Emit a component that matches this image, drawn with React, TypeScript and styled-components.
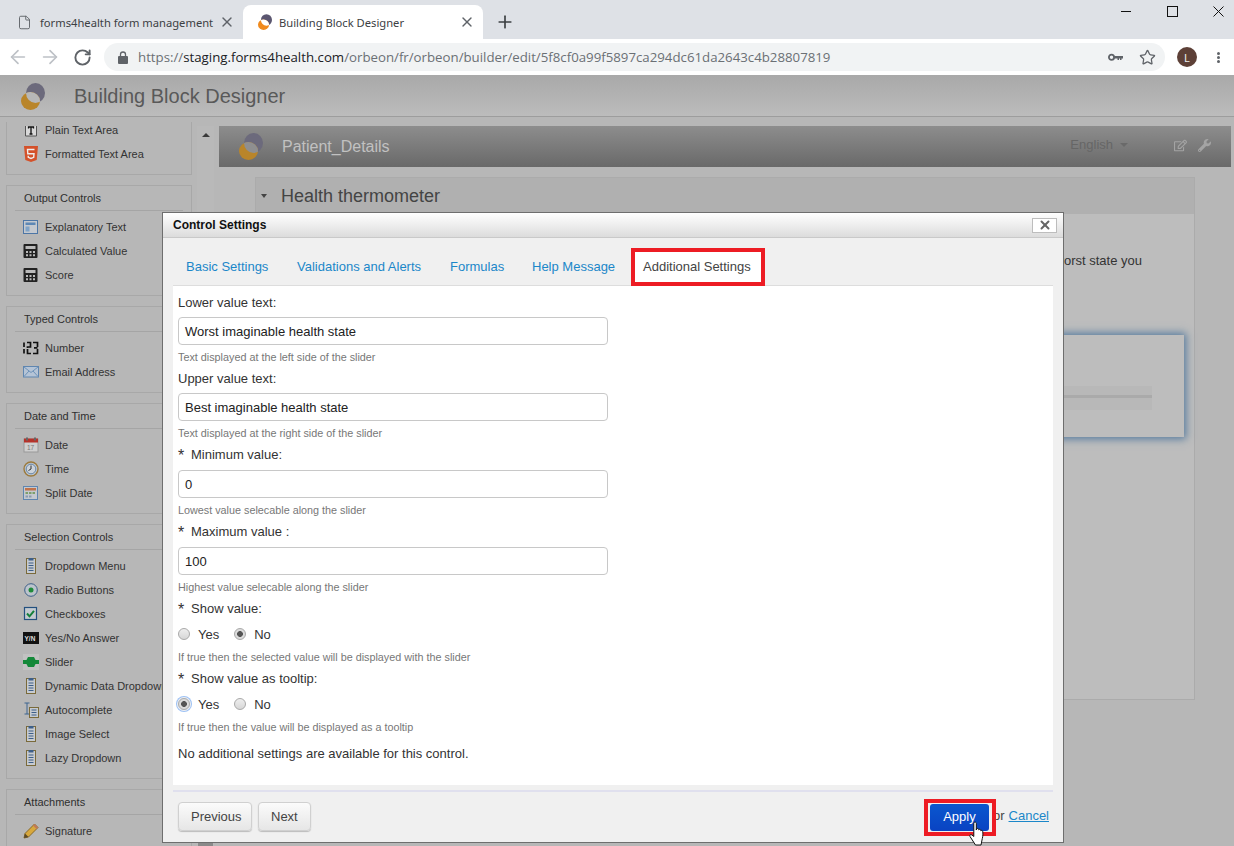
import React, { useId } from "react";
import styled, { createGlobalStyle } from "styled-components";
import { ArrowLeft, ArrowRight, RotateCw, Plus, X, Star, File } from "lucide-react";
import { FaRegEdit, FaWrench } from "react-icons/fa";

const Global = createGlobalStyle`
  html, body { margin: 0; padding: 0; background: #b7b7b7; }
  * { box-sizing: border-box; }
  #root { width: 1234px; height: 846px; overflow: hidden; }
`;

const Shell = styled.div`
  position: relative; width: 1234px; height: 846px; overflow: hidden;
  display: flex; flex-direction: column;
  font-family: "Liberation Sans", Arial, sans-serif; color: #333;
`;
const TabStrip = styled.div`
  height: 39px; flex: none; background: #dee1e6; display: flex; align-items: flex-end; padding-left: 8px;
  font-family: "Noto Sans", "Open Sans", sans-serif; font-size: 11.2px; color: #3c4043;
`;
const BrowserTab = styled.div<{ $active?: boolean; $w: number }>`
  width: ${p => p.$w}px; height: 34px; display: flex; align-items: center; gap: 0;
  padding: 0 8px 0 ${p => (p.$active ? 15 : 9)}px;
  border-radius: 8px 8px 0 0; background: ${p => (p.$active ? "#fff" : "transparent")};
  svg { flex: none; }
`;
const TabTitle = styled.span<{ $active?: boolean }>`
  flex: 1; margin-left: ${p => (p.$active ? 7 : 8)}px; white-space: nowrap;
`;
const PlusBtn = styled.div`
  height: 34px; margin-left: 12px; display: flex; align-items: center; color: #3c4043;
`;
const WinControls = styled.div`
  margin-left: auto; margin-right: -7px; align-self: flex-start; display: flex; height: 22px; align-items: center; color: #222;
`;
const WinBtn = styled.div`
  width: 46px; height: 22px; display: flex; align-items: center; justify-content: center;
`;
const Toolbar = styled.div`
  height: 37px; flex: none; background: #fff; display: flex; align-items: center; padding-left: 2px;
  border-bottom: 1px solid #a9a9a9;
`;
const NavBtn = styled.div<{ $off?: boolean }>`
  width: 32px; height: 28px; display: flex; align-items: center; justify-content: center;
  color: ${p => (p.$off ? "#bdc1c6" : "#5f6368")};
`;
const Omnibox = styled.div`
  width: 1061px; height: 28px; margin-left: 6px; background: #f1f3f4; border-radius: 14px; display: flex; align-items: center;
  padding: 0 2px 0 14px; font-family: "Open Sans", "Noto Sans", sans-serif; font-size: 13.26px;
`;
const Url = styled.span`
  margin-left: 10px; color: #6b7075; white-space: nowrap; flex: 1;
  b { font-weight: 400; color: #202124; }
`;
const OmniIcon = styled.div`
  width: 32px; display: flex; justify-content: center; color: #5f6368;
`;
const Avatar = styled.div`
  width: 20px; height: 20px; margin-left: 12px; border-radius: 50%; background: #5d4037; color: #eee;
  font: 11px "Noto Sans", sans-serif; display: flex; align-items: center; justify-content: center;
`;
const DotsBtn = styled.div`
  margin-left: 20px; display: flex; flex-direction: column; gap: 1px;
  i { width: 3px; height: 3px; background: #5f6368; border-radius: 50%; display: block; }
`;
const AppHeader = styled.div`
  height: 41px; flex: none; display: flex; align-items: center; padding-left: 21px;
  background: linear-gradient(#a9a9a9, #bcbcbc); border-bottom: 1px solid #9d9d9d;
`;
const AppTitle = styled.div`
  margin-left: 29px; font-size: 20px; color: #595959;
`;
const Workspace = styled.div`
  flex: 1; min-height: 0; display: flex; background: #b7b7b7;
`;
const Sidebar = styled.div`
  width: 197px; flex: none; margin-top: 5px; padding: 0 5px 0 6px; overflow: hidden;
`;
const Panel = styled.div<{ $first?: boolean }>`
  border: 1px solid #a8a8a8; ${p => p.$first && "border-top: none; margin-top: -4px;"} margin-bottom: 10px;
  padding: 0 8px 8px; background: #b7b7b7;
`;
const PanelTitle = styled.div`
  height: 25px; margin-bottom: 4px; border-bottom: 1px solid #a5a5a5; padding: 6px 0 0 9px;
  font-size: 11px; line-height: 13px; color: #2f2f2f; white-space: nowrap;
`;
const Row = styled.div`
  height: 24px; display: flex; align-items: center; font-size: 11px; line-height: 12px; color: #333; white-space: nowrap;
`;
const RowIcon = styled.span`
  width: 30px; padding-left: 8px; flex: none; display: flex; align-items: center;
`;
const ScrollTrack = styled.div`
  width: 17px; flex: none; margin-top: 9px; background: #b9b9b9; display: flex; flex-direction: column; align-items: center;
`;
const ScrollUp = styled.div`
  margin-top: 7px; width: 0; height: 0; border-left: 4px solid transparent; border-right: 4px solid transparent; border-bottom: 4px solid #3a3a3a;
`;
const ScrollThumb = styled.div`
  margin-top: 706px; width: 15px; height: 30px; background: #8a8a8a;
`;
const Main = styled.div`
  flex: 1; margin-left: 5px; padding-top: 9px; min-width: 0; padding-right: 3px;
`;
const FormBar = styled.div`
  height: 41px; display: flex; align-items: center; padding: 0 20px 0 20px;
  background: linear-gradient(#8d8d8d, #696969);
`;
const FormName = styled.div`
  margin-left: 19px; font-size: 16px; color: #c1c1c1; flex: 1;
`;
const Lang = styled.div`
  font-size: 13px; line-height: 15px; margin-top: -4px; color: #666; display: flex; align-items: center; gap: 7px; margin-right: 46px;
  i { width: 0; height: 0; border-left: 4px solid transparent; border-right: 4px solid transparent; border-top: 4px solid #6a6a6a; }
`;
const FormTools = styled.div`
  display: flex; gap: 11px; color: #a4a4a4; margin-top: -3px; align-items: center;
`;
const Section = styled.div`
  margin: 10px 36px 0 36px; height: 523px; border: 1px solid #ababab; background: #bdbdbd;
`;
const SectionHead = styled.div`
  height: 36px; background: #b0b0b0; display: flex; align-items: center; padding-left: 5px; font-size: 18px; color: #444;
  i { width: 0; height: 0; margin-right: 14px; border-left: 3.5px solid transparent; border-right: 3.5px solid transparent; border-top: 4px solid #444; }
`;
const Question = styled.div`
  margin: 39px 52px 0 0; text-align: right; font-size: 13px; line-height: 16px; color: #333;
`;
const SliderBox = styled.div`
  margin: 66px 10px 0 18px; height: 102px; background: #bdbdbd; box-shadow: 0 0 8px 2px #557a9e;
  padding: 51px 32px 0 30px;
`;
const SliderTrack = styled.div`
  height: 24px; background: #b8b8b8; padding-top: 9px;
  i { display: block; height: 3px; background: #aaa; }
`;
const Modal = styled.div`
  position: absolute; left: 162px; top: 212px; width: 902px; height: 631px; background: #f0f0f0;
  border: 1px solid #6e6e6e; display: flex; flex-direction: column;
`;
const ModalHead = styled.div`
  height: 25px; flex: none; display: flex; align-items: center; justify-content: space-between; padding: 0 6px 0 10px;
  background: linear-gradient(#fff, #dcdcdc); border-bottom: 1px solid #c9c9c9;
  font-size: 12px; font-weight: 700; color: #111;
`;
const CloseBtn = styled.div`
  width: 25px; height: 15px; background: #fff; border: 1px solid #bdbdbd; display: flex; align-items: center; justify-content: center; color: #666;
`;
const Tabs = styled.div`
  flex: none; margin: 10px 10px 0 10px; height: 38px; display: flex; align-items: stretch;
  border-bottom: 1px solid #ddd; font-size: 13px;
`;
const TabLink = styled.div<{ $w: number }>`
  width: ${p => p.$w}px; padding-top: 11px; line-height: 15px; color: #1b87c9; white-space: nowrap; padding-left: 13px;
`;
const TabActive = styled.div`
  width: 134px; margin-bottom: -1px; border: 4px solid #ed1c24; padding: 7px 0 0 8px; line-height: 15px; background: #fff; color: #444; white-space: nowrap;
`;
const Content = styled.div`
  flex: none; height: 499px; margin: 0 10px; background: #fff; padding: 8px 5px 0;
`;
const FieldLabel = styled.div<{ $req?: boolean }>`
  height: ${p => (p.$req ? 17 : 16)}px; font-size: 13px; line-height: 17px; color: #333; display: flex; white-space: nowrap;
`;
const Req = styled.span`
  width: 13px; font-size: 16px; line-height: 19px; color: #333;
`;
const TextBox = styled.div`
  width: 430px; height: 28px; margin-top: 7px; border: 1px solid #c8c8c8; border-radius: 4px; padding: 1px 0 0 6px;
  font-size: 13px; line-height: 26px; color: #222; background: #fff;
`;
const Hint = styled.div<{ $wide?: boolean }>`
  margin: ${p => (p.$wide ? "9px 0 7px" : "6px 0 7px")}; height: 12px; font-size: 10.8px; line-height: 12px; color: #777; white-space: nowrap;
`;
const RadioRow = styled.div`
  display: flex; align-items: center; height: 16px; margin-top: 9px; font-size: 13px; color: #333;
`;
const RadioItem = styled.div`
  display: flex; align-items: center; margin-right: 15px;
`;
const RadioLabel = styled.span`
  margin-left: 8px;
`;
const Radio = styled.span<{ $on?: boolean; $focus?: boolean }>`
  width: 12px; height: 12px; border-radius: 50%; border: 1px solid #a9a9a9; flex: none;
  background: ${p => (p.$on ? "radial-gradient(circle, #555 0 2.6px, #dcdcdc 3.2px)" : "linear-gradient(#eee, #d7d7d7)")};
  ${p => p.$focus && "box-shadow: 0 0 0 1px #f0f0f0, 0 0 0 2px #9cc1f5;"}
`;
const NoteLine = styled.div`
  margin-top: 13px; font-size: 13px; line-height: 16px; color: #333;
`;
const Divider = styled.div`
  flex: none; height: 2px; margin: 5px 10px 0; background: #e0e0ee;
`;
const Footer = styled.div`
  flex: 1; display: flex; align-items: center; padding: 0 14px 0 15px; font-size: 13px;
`;
const GrayBtn = styled.div<{ $w: number }>`
  width: ${p => p.$w}px; height: 29px; margin-top: -2px; padding-left: 12px; margin-right: 6px; display: flex; align-items: center; border: 1px solid #d0d0d0; border-radius: 4px;
  background: linear-gradient(#fbfbfb, #e6e6e6); color: #444; box-shadow: 0 1px 1px #bbb;
`;
const ApplyFrame = styled.div`
  position: relative; z-index: 1; margin-left: auto; border: 4px solid #ed1c24; padding: 1px 3px 1px 2px; background: #f0f0f0;
`;
const ApplyBtn = styled.div`
  width: 59px; height: 27px; padding-bottom: 2px; background: linear-gradient(#0a57cf, #0a43c2); border-radius: 3px; color: #fff; font-size: 13px;
  display: flex; align-items: center; justify-content: center;
`;
const OrText = styled.span`
  margin-left: -3px; margin-right: 4px; color: #444; margin-top: -3px;
`;
const CancelLink = styled.span`
  color: #1b87c9; text-decoration: underline; margin-top: -3px;
`;
const Pointer = styled.svg`
  position: absolute; z-index: 2; left: 969px; top: 821px;
`;

const Logo = ({ w = 24, h = 27, top = "#6c6a7c", bottom = "#b9852a", mid = "#b7b7b7" }: { w?: number; h?: number; top?: string; bottom?: string; mid?: string }) => {
  const id = useId();
  return (
    <svg width={w} height={h} viewBox="0 0 24 27">
      <defs>
        <clipPath id={id}><ellipse cx="14.500" cy="10" rx="9.500" ry="10" /></clipPath>
      </defs>
      <ellipse cx="14.500" cy="10" rx="9.500" ry="10" fill={top} />
      <ellipse cx="9.500" cy="18" rx="9.500" ry="9" fill={bottom} />
      <ellipse cx="9.500" cy="18" rx="9.500" ry="9" fill={mid} clipPath={`url(#${id})`} />
    </svg>
  );
};

type IconName = "plain" | "html" | "explain" | "calc" | "num" | "mail" | "date" | "time" | "split" | "drop" | "radio" | "check" | "yn" | "slider" | "auto" | "sign";

const RowGlyph = ({ name }: { name: IconName }) => {
  switch (name) {
    case "plain":
      return <svg width="16" height="16" viewBox="0 0 16 16"><path d="M2.500 4v10h11V4" fill="#d8d8d8" stroke="#555" /><path d="M5.500 6.500V5h5v1.500M8 5v7M6.500 12h3" fill="none" stroke="#111" strokeWidth="1.300" /></svg>;
    case "html":
      return <svg width="16" height="16" viewBox="0 0 16 16"><path d="M1 0h14l-1.300 14L8 16l-5.700-2z" fill="#d4512a" /><path d="M11.500 3.500h-7l.3 4.200h6.200l-.3 3.600L8 12.400l-2.700-1.100-.1-1.500" fill="none" stroke="#eee" strokeWidth="1.400" /></svg>;
    case "explain":
      return <svg width="16" height="16" viewBox="0 0 16 16"><rect x=".5" y="1.500" width="14" height="13" fill="#c5c9cf" stroke="#4d76a6" /><rect x="2.500" y="3.500" width="10" height="2.500" fill="#5d87b5" /><rect x="2.500" y="7.500" width="4" height="5" fill="#7fa3c8" /></svg>;
    case "calc":
      return <svg width="16" height="16" viewBox="0 0 16 16"><rect x=".5" y="1" width="14" height="14" rx="1" fill="#222" /><rect x="2.500" y="3" width="10" height="3" fill="#bbb" /><path d="M3 8h2v2H3zM6.500 8h2v2h-2zM10 8h2v2h-2zM3 11.300h2v2H3zM6.500 11.300h2v2h-2zM10 11.300h2v2h-2z" fill="#bbb" /></svg>;
    case "num":
      return <svg width="16" height="14" viewBox="0 0 16 14"><path d="M1 1.500v4.500M1 8v4.500M4 1.500h3.500v4.500H4.500v1M4.500 8v4.500h3.500M10 1.500h4.500v4.500M11 6.800h3.500M14.500 8v4.500H10" fill="none" stroke="#111" strokeWidth="1.700" /></svg>;
    case "mail":
      return <svg width="16" height="12" viewBox="0 0 16 12"><rect x=".5" y=".5" width="15" height="10.500" fill="#b5c4d6" stroke="#5f86b0" /><path d="M1 1l7 5.500L15 1M1 10.500l5-5.500M15 10.500l-5-5.500" fill="none" stroke="#6f93b9" /></svg>;
    case "date":
      return <svg width="16" height="16" viewBox="0 0 16 16"><rect x="1" y="2" width="14" height="13" fill="#cfcfcf" stroke="#999" /><rect x="1" y="1.500" width="14" height="4" fill="#b5322a" /><rect x="3" y="0.500" width="2" height="3" fill="#666" /><rect x="11" y="0.500" width="2" height="3" fill="#666" /><text x="4" y="12.500" fontSize="6.500" fill="#777" fontFamily="Liberation Sans">17</text></svg>;
    case "time":
      return <svg width="16" height="16" viewBox="0 0 16 16"><circle cx="8" cy="8" r="7" fill="#b9c4d0" stroke="#9c7a3d" strokeWidth="1.400" /><circle cx="8" cy="8" r="4.800" fill="#cdd3da" stroke="#6b86a4" /><path d="M8 4.500V8l-2.500 1.500" fill="none" stroke="#333" /></svg>;
    case "split":
      return <svg width="16" height="16" viewBox="0 0 16 16"><rect x=".5" y="1.500" width="14" height="13" fill="#c5c9cf" stroke="#5f86b0" /><rect x="2" y="3" width="11" height="2.500" fill="#c0724a" /><path d="M2.500 7h2.500v2H2.500zM6 7h2.500v2H6zM9.500 7H12v2H9.500z" fill="#7d9f6a" /><path d="M2.500 10.500h2.500v2H2.500zM6 10.500h2.500v2H6z" fill="#8a9bb0" /></svg>;
    case "drop":
      return <svg width="16" height="16" viewBox="0 0 16 16"><rect x="3.500" y=".5" width="9" height="15" fill="#c7cbd0" stroke="#7a6a3a" /><rect x="5.500" y="0" width="5" height="2.500" fill="#3d5f89" /><path d="M5.500 5h5M5.500 7.500h5M5.500 10h5M5.500 12.500h5" stroke="#3d5f89" /></svg>;
    case "radio":
      return <svg width="16" height="16" viewBox="0 0 16 16"><circle cx="8" cy="8" r="6.300" fill="#bcc4cc" stroke="#3d5f89" /><circle cx="8" cy="8" r="2.500" fill="#1f8a3a" /></svg>;
    case "check":
      return <svg width="16" height="16" viewBox="0 0 16 16"><rect x="1.500" y="1.500" width="12" height="12" fill="#c4cad0" stroke="#23507f" strokeWidth="1.200" /><path d="M4 7.500l2.500 2.800L11 4.800" fill="none" stroke="#14803a" strokeWidth="2" /></svg>;
    case "yn":
      return <svg width="16" height="12" viewBox="0 0 16 12"><rect width="16" height="12" fill="#111" /><text x="1.500" y="8.500" fontSize="6.500" fontWeight="700" fill="#ddd" fontFamily="Liberation Sans">Y/N</text></svg>;
    case "slider":
      return <svg width="16" height="16" viewBox="0 0 16 16"><rect width="16" height="16" fill="#c2c2c2" /><rect y="6" width="16" height="4" fill="#15893a" /><path d="M2.500 8l2.500-5h6l2.500 5-2.500 5H5z" fill="#15893a" /></svg>;
    case "auto":
      return <svg width="16" height="16" viewBox="0 0 16 16"><path d="M1.500 1h5M4 1v11M1.500 12h5" fill="none" stroke="#3d6590" /><rect x="6.500" y="5.500" width="9" height="10" fill="#c5cad0" stroke="#7a6a3a" /><path d="M8.500 8h5M8.500 10.500h5M8.500 13h5" stroke="#3d5f89" /></svg>;
    case "sign":
      return <svg width="16" height="16" viewBox="0 0 16 16"><path d="M1 15l1-4.500L11.500 1 15 4.500 5.500 14z" fill="#d8a83c" stroke="#8a6a2a" /><path d="M11.500 1L15 4.500 13.500 6 10 2.500z" fill="#c0785a" /><path d="M1 15l1-4.500 3.500 3.500z" fill="#5a4a2a" /></svg>;
  }
};

type Item = [IconName, string];
const panels: { title?: string; items: Item[]; first?: boolean }[] = [
  { first: true, items: [["plain", "Plain Text Area"], ["html", "Formatted Text Area"]] },
  { title: "Output Controls", items: [["explain", "Explanatory Text"], ["calc", "Calculated Value"], ["calc", "Score"]] },
  { title: "Typed Controls", items: [["num", "Number"], ["mail", "Email Address"]] },
  { title: "Date and Time", items: [["date", "Date"], ["time", "Time"], ["split", "Split Date"]] },
  { title: "Selection Controls", items: [["drop", "Dropdown Menu"], ["radio", "Radio Buttons"], ["check", "Checkboxes"], ["yn", "Yes/No Answer"], ["slider", "Slider"], ["drop", "Dynamic Data Dropdown"], ["auto", "Autocomplete"], ["drop", "Image Select"], ["drop", "Lazy Dropdown"]] },
  { title: "Attachments", items: [["sign", "Signature"]] },
];

const tabs: [string, number][] = [["Basic Settings", 111], ["Validations and Alerts", 153], ["Formulas", 82], ["Help Message", 112]];

const TextField = ({ label, value, hint, req }: { label: string; value: string; hint: string; req?: boolean }) => (
  <div>
    <FieldLabel $req={req}>{req && <Req>*</Req>}{label}</FieldLabel>
    <TextBox>{value}</TextBox>
    <Hint>{hint}</Hint>
  </div>
);

const RadioField = ({ label, yes, hint }: { label: string; yes: boolean; hint: string }) => (
  <div>
    <FieldLabel $req><Req>*</Req>{label}</FieldLabel>
    <RadioRow>
      <RadioItem><Radio $on={yes} $focus={yes} /><RadioLabel>Yes</RadioLabel></RadioItem>
      <RadioItem><Radio $on={!yes} /><RadioLabel>No</RadioLabel></RadioItem>
    </RadioRow>
    <Hint $wide>{hint}</Hint>
  </div>
);

export default function App() {
  return (
    <Shell>
      <Global />
      <TabStrip>
        <BrowserTab $w={235}>
          <File size={15} strokeWidth={1.500} color="#5f6368" />
          <TabTitle>forms4health form management</TabTitle>
          <X size={16} strokeWidth={2} color="#5f6368" />
        </BrowserTab>
        <BrowserTab $active $w={240}>
          <Logo w={14} h={16} top="#5b5670" bottom="#f08a1d" mid="#fff" />
          <TabTitle $active>Building Block Designer</TabTitle>
          <X size={16} strokeWidth={2} color="#5f6368" />
        </BrowserTab>
        <PlusBtn><Plus size={20} strokeWidth={2} /></PlusBtn>
        <WinControls>
          <WinBtn><svg width="11" height="11" viewBox="0 0 11 11"><path d="M0 5.500h10" stroke="#111" /></svg></WinBtn>
          <WinBtn><svg width="11" height="11" viewBox="0 0 11 11"><rect x=".5" y=".5" width="10" height="10" fill="none" stroke="#111" /></svg></WinBtn>
          <WinBtn><svg width="11" height="11" viewBox="0 0 11 11"><path d="M.5.5l10 10M10.500.5l-10 10" stroke="#111" /></svg></WinBtn>
        </WinControls>
      </TabStrip>
      <Toolbar>
        <NavBtn $off><ArrowLeft size={22} strokeWidth={1.800} /></NavBtn>
        <NavBtn $off><ArrowRight size={22} strokeWidth={1.800} /></NavBtn>
        <NavBtn><RotateCw size={19} strokeWidth={2.400} /></NavBtn>
        <Omnibox>
          <svg width="10" height="13" viewBox="0 0 10 13"><path d="M2.500 5V3.500a2.500 2.500 0 0 1 5 0V5" fill="none" stroke="#5f6368" strokeWidth="1.300" /><rect y="5" width="10" height="8" rx="1" fill="#5f6368" /></svg>
          <Url>https://<b>staging.forms4health.com</b>/orbeon/fr/orbeon/builder/edit/5f8cf0a99f5897ca294dc61da2643c4b28807819</Url>
          <OmniIcon><svg width="15" height="9" viewBox="0 0 15 9"><circle cx="3.500" cy="4.200" r="2.600" fill="none" stroke="#5f6368" strokeWidth="1.800" /><path d="M6 3h9v2.500h-1.500V7H12V5.500h-1V7H9.500V5.500H6z" fill="#5f6368" /></svg></OmniIcon>
          <OmniIcon><Star size={17} strokeWidth={1.800} /></OmniIcon>
        </Omnibox>
        <Avatar>L</Avatar>
        <DotsBtn><i /><i /><i /></DotsBtn>
      </Toolbar>
      <AppHeader>
        <Logo />
        <AppTitle>Building Block Designer</AppTitle>
      </AppHeader>
      <Workspace>
        <Sidebar>
          {panels.map((p, i) => (
            <Panel key={i} $first={p.first}>
              {p.title && <PanelTitle>{p.title}</PanelTitle>}
              {p.items.map(([icon, text]) => (
                <Row key={text}><RowIcon><RowGlyph name={icon} /></RowIcon>{text}</Row>
              ))}
            </Panel>
          ))}
        </Sidebar>
        <ScrollTrack><ScrollUp /><ScrollThumb /></ScrollTrack>
        <Main>
          <FormBar>
            <Logo mid="#8f8f90" />
            <FormName>Patient_Details</FormName>
            <Lang>English<i /></Lang>
            <FormTools>
              <FaRegEdit size={13} />
              <FaWrench size={13} />
            </FormTools>
          </FormBar>
          <Section>
            <SectionHead><i />Health thermometer</SectionHead>
            <Question>worst state you</Question>
            <SliderBox><SliderTrack><i /></SliderTrack></SliderBox>
          </Section>
        </Main>
      </Workspace>
      <Modal>
        <ModalHead>
          Control Settings
          <CloseBtn><X size={14} strokeWidth={3.400} /></CloseBtn>
        </ModalHead>
        <Tabs>
          {tabs.map(([t, w]) => <TabLink key={t} $w={w}>{t}</TabLink>)}
          <TabActive>Additional Settings</TabActive>
        </Tabs>
        <Content>
          <TextField label="Lower value text:" value="Worst imaginable health state" hint="Text displayed at the left side of the slider" />
          <TextField label="Upper value text:" value="Best imaginable health state" hint="Text displayed at the right side of the slider" />
          <TextField req label="Minimum value:" value="0" hint="Lowest value selecable along the slider" />
          <TextField req label="Maximum value :" value="100" hint="Highest value selecable along the slider" />
          <RadioField label="Show value:" yes={false} hint="If true then the selected value will be displayed with the slider" />
          <RadioField label="Show value as tooltip:" yes hint="If true then the value will be displayed as a tooltip" />
          <NoteLine>No additional settings are available for this control.</NoteLine>
        </Content>
        <Divider />
        <Footer>
          <GrayBtn $w={74}>Previous</GrayBtn>
          <GrayBtn $w={53}>Next</GrayBtn>
          <ApplyFrame><ApplyBtn>Apply</ApplyBtn></ApplyFrame>
          <OrText>or</OrText>
          <CancelLink>Cancel</CancelLink>
        </Footer>
      </Modal>
      <Pointer width="20" height="25" viewBox="0 0 20 25">
        <path d="M5 1.500c1-.8 2.200-.3 2.300.9V9l.2-1c.6-.8 1.800-.7 2.100.2l.1.600c.5-.7 1.700-.6 2 .2l.1.700c.6-.6 1.700-.3 1.900.6.300 2 .3 5-.4 7.200L12 24H6.500L1 15.500c-.8-1.300.7-2.500 1.800-1.600L4.800 15.500V2.500z" fill="#fff" stroke="#111" strokeWidth="1" />
      </Pointer>
    </Shell>
  );
}
